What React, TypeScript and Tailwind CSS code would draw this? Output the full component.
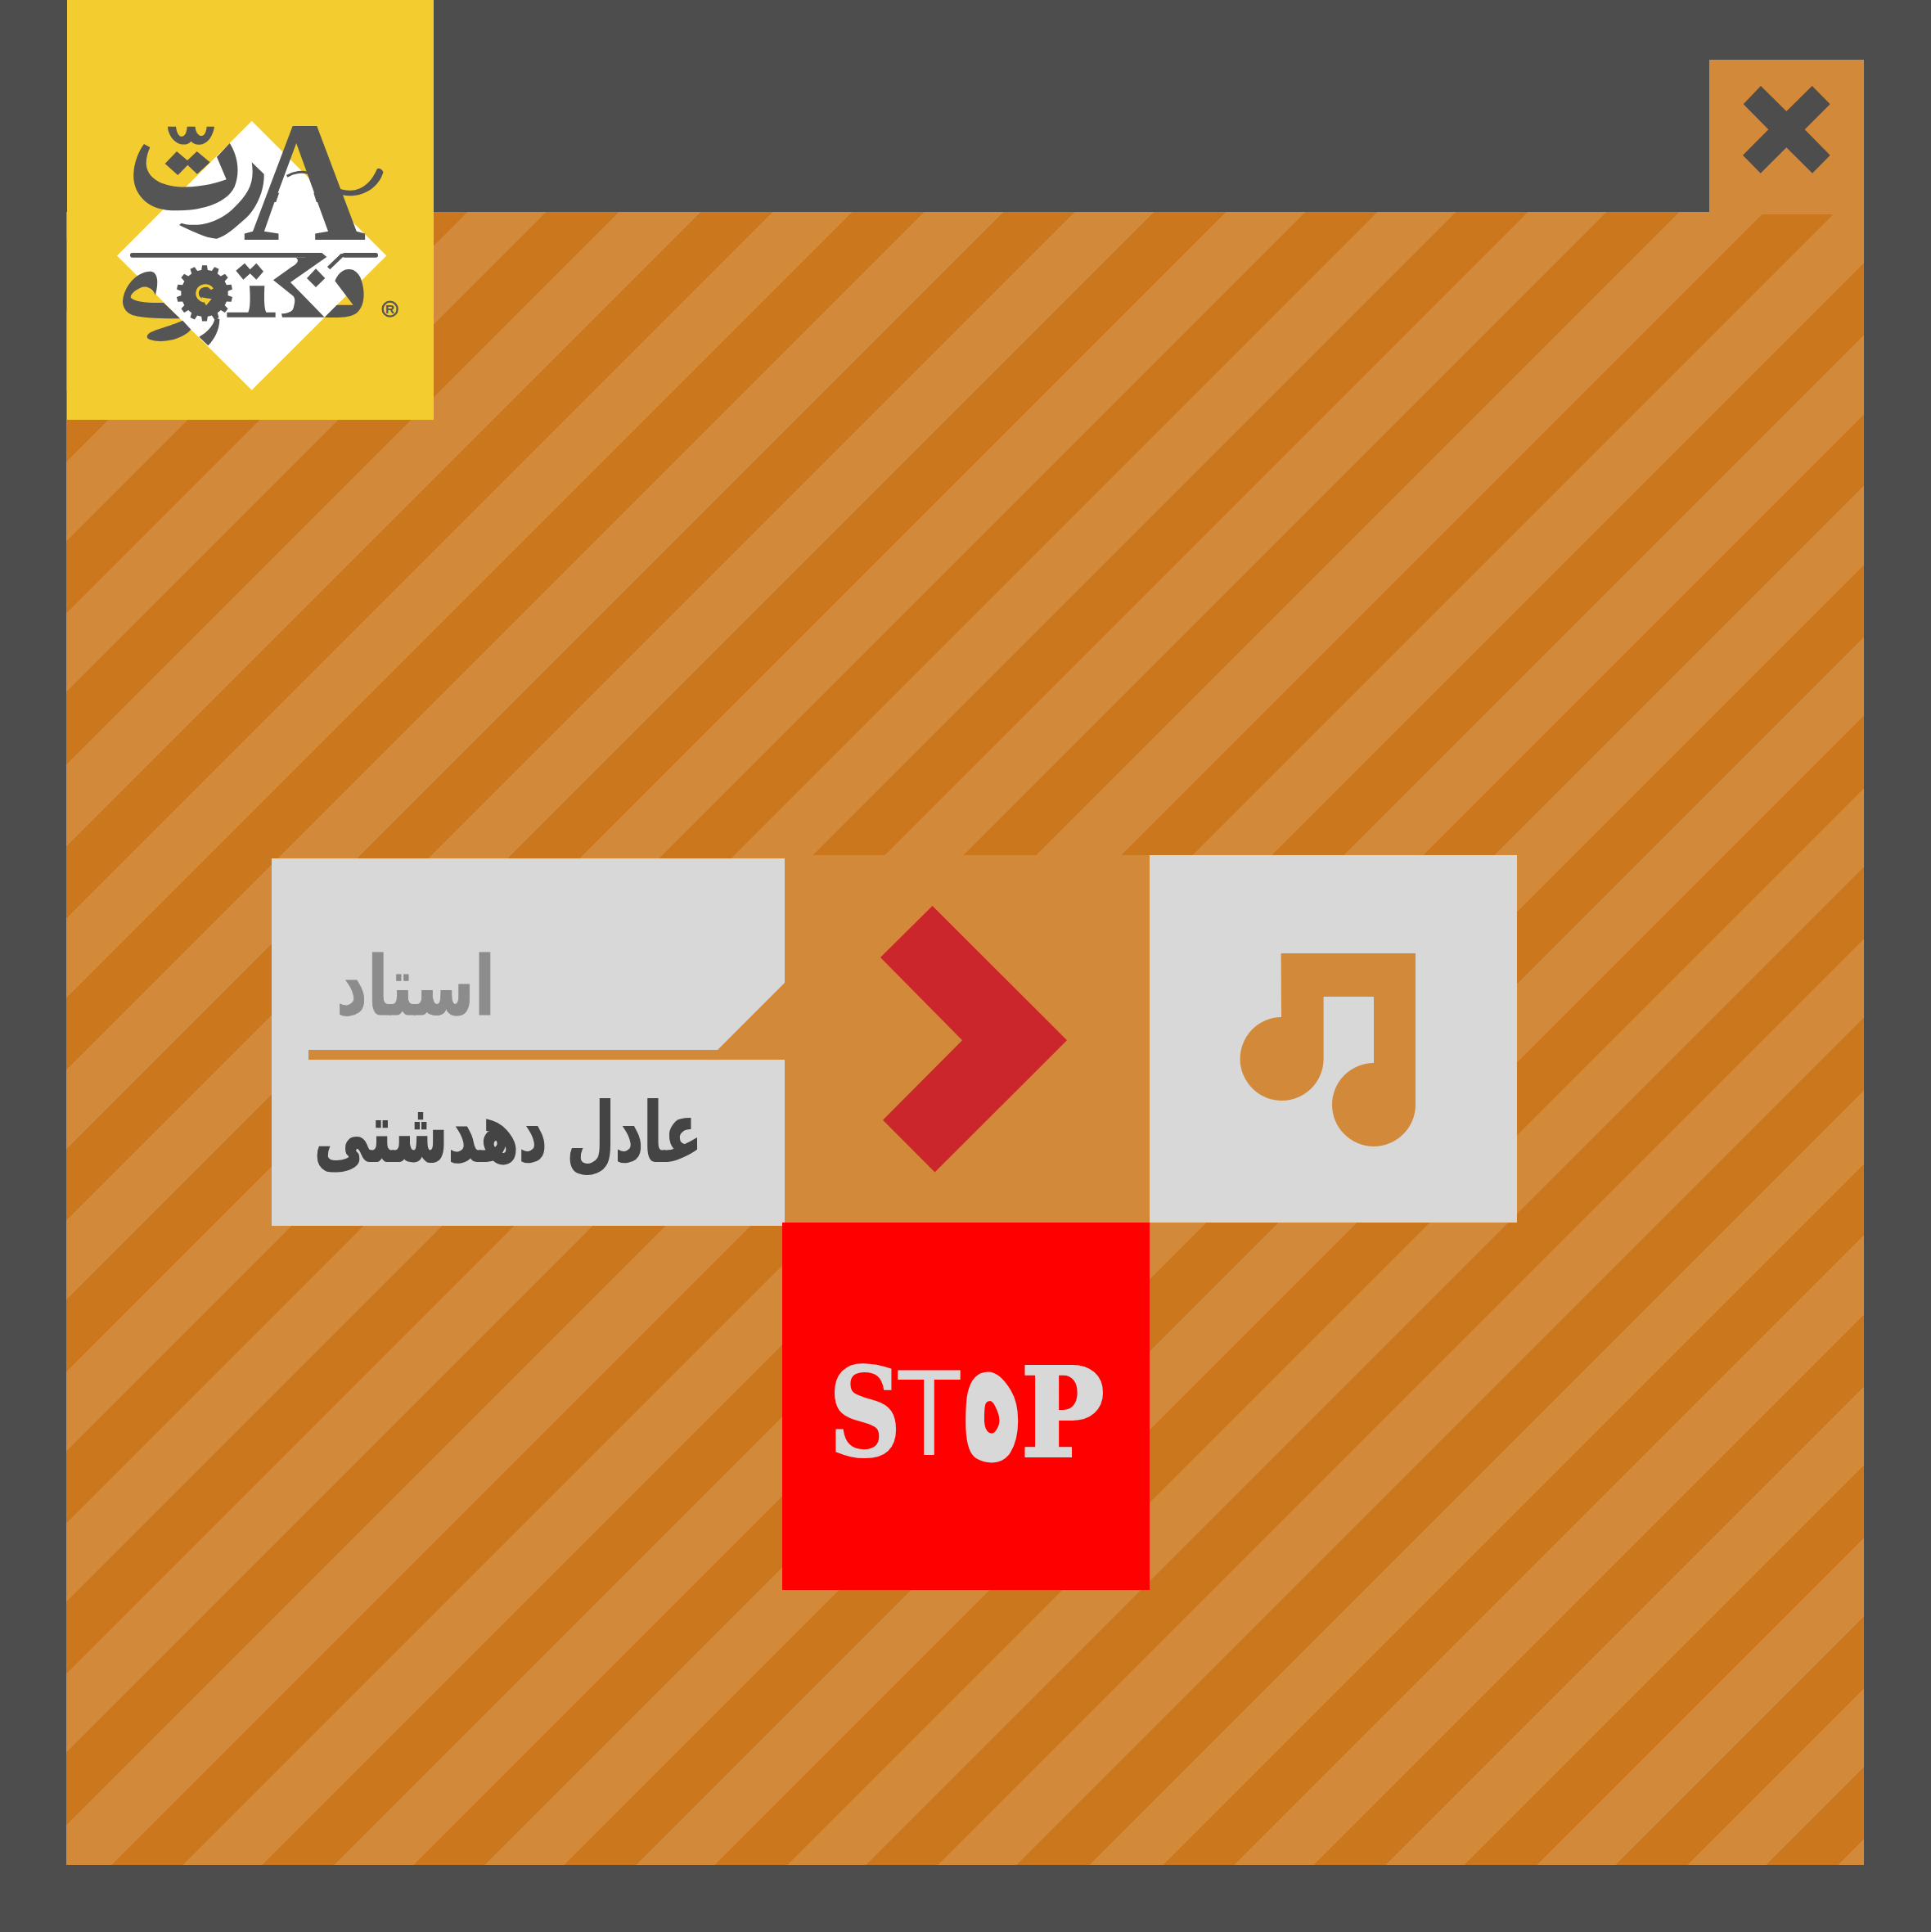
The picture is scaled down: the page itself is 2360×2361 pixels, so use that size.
const darkStarts = [373.5, 558, 742.5, 927, 1116, 1300.5, 1485, 1669.5, 1854, 2038.5, 2223, 2415, 2599.5, 2784, 2968.5, 3153, 3337.5, 3522, 3700, 3884.6, 4069, 4253.5, 4437.7]

// stripes are not quite regular in the picture, so the stops come from a list
function stripeGradient(originSum: number) {
  const light = "#d28a3a"
  const dark = "#cb771d"
  const px = (v: number) => ((v - originSum) / Math.SQRT2).toFixed(2) + "px"
  const stops = darkStarts.map((s) => `${light} ${px(s)}, ${dark} ${px(s)}, ${dark} ${px(s + 88)}, ${light} ${px(s + 88)}`)
  return `linear-gradient(135deg, ${stops.join(", ")})`
}

function gearPoints(cx: number, cy: number, root: number, tip: number, teeth: number) {
  const pts: string[] = []
  const step = (Math.PI * 2) / teeth
  for (let i = 0; i < teeth; i++) {
    const a = i * step - Math.PI / 2
    const offs: [number, number][] = [
      [-0.5, root],
      [-0.3, root],
      [-0.19, tip],
      [0.19, tip],
      [0.3, root],
    ]
    offs.forEach(([o, r]) => {
      const t = a + o * step
      pts.push(`${(cx + r * Math.cos(t)).toFixed(1)},${(cy + r * Math.sin(t)).toFixed(1)}`)
    })
  }
  return pts.join(" ")
}

function Logo() {
  const ink = "#555555"
  return (
    <svg viewBox="0 0 448 513" className="w-full h-full">
      <polygon points="225.7,147.7 390.3,312.5 225.7,476.7 61,312.5" fill="#ffffff" />
      <g transform="translate(58 140) scale(0.33333)" fill={ink}>
        <path d="M108 108 L130 120 C110 165 105 215 160 245 C225 280 340 265 410 238 L375 155 L422 105 C445 140 465 200 440 265 C410 330 300 360 190 350 C110 340 65 280 70 215 C72 175 88 135 108 108 Z" />
        <path d="M195 44 H225 C228 70 238 82 247 80 C258 80 265 65 266 44 H296 C296 65 310 80 320 78 C330 78 337 60 338 44 H366 C360 85 335 112 310 110 C295 110 285 105 281 98 C270 110 255 112 240 108 C215 100 195 70 195 44 Z" />
        <path d="M185 180 L228 135 L267 168 L302 135 L350 175 L303 218 L268 185 L232 222 Z" />
        <path d="M237 405 L245 398 C300 415 380 400 440 340 C490 290 515 250 503 175 L548 218 C550 280 520 350 470 390 C440 415 410 445 375 455 C340 455 290 430 237 405 Z" />
        <text x="470" y="458" fontSize="627" fontWeight="700" fontFamily="'Liberation Serif', serif">A</text>
        <path d="M790 250 C830 290 920 300 962 200 C970 192 985 205 985 212 C965 280 880 320 805 285 Z" />
        <polygon points="612,262 722,262 742,326 590,326" fill="#ffffff" />
        <path d="M632 226 C660 210 690 208 708 214" fill="none" stroke={ink} strokeWidth="9" />
      </g>
      <g transform="translate(58 290) scale(0.33333)" fill={ink}>
        <rect x="57" y="57" width="700" height="17" rx="8" />
        <rect x="835" y="57" width="131" height="17" rx="8" />
        <path d="M665 74 H700 L690 57 H760 L778 72 L645 165 L770 293 H615 L612 280 C630 280 650 275 655 262 C660 245 665 225 655 215 L582 157 L650 108 C668 98 680 85 665 74 Z" />
        <path d="M780 108 L830 60 H850 L790 118 Z" />
        <polygon points="705,150 738,115 772,150 738,183" />
        <path d="M808 160 C830 105 880 105 900 145 C920 190 920 250 890 275 C870 295 820 295 770 293 L815 248 H875 Z" />
        <path d="M30 235 C35 175 85 125 130 125 C155 125 165 155 150 212 C135 180 110 178 95 185 C70 195 55 215 60 222 C80 240 130 240 180 240 L240 298 C180 298 110 298 65 285 C45 278 30 260 30 235 Z" />
        <path d="M120 360 C130 340 180 335 250 305 L280 338 C250 375 170 390 130 375 C120 372 118 365 120 360 Z" />
        <path d="M310 365 C345 345 365 320 368 295 L385 300 C385 340 365 375 343 397 Z" />
        <polygon points={gearPoints(330, 205, 86, 103, 14)} />
        <path d="M412 275 H490 C498 260 498 220 495 178 H550 C548 220 548 260 556 275 H590 V293 H412 Z" />
        <polygon points="445,122 477,95 497,118 520,95 546,125 520,155 497,133 472,155" />
        <circle cx="1010" cy="263" r="27" fill="none" stroke={ink} strokeWidth="7" />
        <text x="1010" y="280" fontSize="46" fontWeight="700" textAnchor="middle" fontFamily="'Liberation Sans', sans-serif">R</text>
      </g>
      <g transform="translate(58 290) scale(0.33333)">
        <path d="M358 190 C345 168 305 175 303 205 C303 220 315 230 328 234" fill="none" stroke="#f3cc30" strokeWidth="11" />
        <polygon points="318,220 356,226 336,250" fill="#f3cc30" />
      </g>
    </svg>
  )
}

export default function App() {
  return (
    <div className="relative w-[2360px] h-[2361px] overflow-hidden bg-[#4d4d4d]">
      <div className="pt-[259px] pl-[81px]">
        <div className="w-[2197px] h-[2020px] pt-[786px] pl-[251px]" style={{ backgroundImage: stripeGradient(340) }}>
          <div className="flex items-start">
            <div className="relative mt-[4px] w-[627px] h-[449px] bg-[#d28a3a]">
              <div className="h-full bg-[#d8d8d8] [clip-path:polygon(0_0,627px_0,627px_152px,545px_234px,45px_234px,45px_246px,627px_246px,627px_449px,0_449px)]">
                <div className="h-[246px] pt-[97px] pl-[79px]">
                  <p dir="rtl" className="w-fit whitespace-nowrap origin-left scale-x-[0.74] text-[100px] leading-[120px] font-bold text-[#8c8c8c] [font-family:'DejaVu_Sans',sans-serif] [-webkit-text-stroke:1px_#8c8c8c]">استاد</p>
                </div>
                <div className="pt-[30px] pl-[52px]">
                  <p dir="rtl" className="w-fit whitespace-nowrap origin-left scale-x-[0.68] text-[100px] leading-[120px] font-bold text-[#444444] [font-family:'DejaVu_Sans',sans-serif] [-webkit-text-stroke:2px_#444444]">عادل دهدشتی</p>
                </div>
              </div>
            </div>
            <div className="w-[446px] h-[449px] bg-[#d28a3a] pl-[117px] pt-[62px]">
              <svg width="228" height="326" viewBox="0 0 228 326">
                <polygon points="63.6,0 0,63 100,164.2 3,261.8 66.5,325.4 228,164.2" fill="#cb262b" />
              </svg>
            </div>
            <div className="w-[449px] h-[449px] bg-[#d8d8d8]">
              <svg width="449" height="449" viewBox="0 0 449 449">
                <path d="M160.6 120 H325 V305 A51 51 0 1 1 274 254 V173 H212.6 V249 A51 51 0 1 1 161 198 Z" fill="#d28a3a" />
              </svg>
            </div>
          </div>
          <div className="relative z-10 -mt-[4px] ml-[624px] w-[449px] h-[449px] bg-[#ff0000] flex items-center pl-[49px] pt-[14px] text-[#d8d8d8]">
            <span className="w-[85px] text-center scale-x-[0.82] text-[150px] leading-none font-bold [font-family:'DejaVu_Serif',serif] [-webkit-text-stroke:2px_#d8d8d8]">S</span>
            <span className="w-[84px] text-center scale-x-[0.9] text-[150px] leading-none [font-family:'Liberation_Sans',sans-serif]">T</span>
            <span className="w-[69px] text-center scale-y-[2.2] translate-y-[-46px] text-[130px] leading-none font-bold [font-family:'DejaVu_Sans',sans-serif]">ه</span>
            <span className="w-[102px] text-center scale-x-[0.9] text-[150px] leading-none font-bold [font-family:'DejaVu_Serif',serif] [-webkit-text-stroke:4px_#d8d8d8]">P</span>
          </div>
        </div>
      </div>

      <div className="absolute left-[82px] top-0 w-[448px] h-[513px] bg-[#f3cc30]">
        <Logo />
      </div>

      <div className="absolute left-[2089px] top-[73px] w-[189px] h-[189px] bg-[#d28a3a] pl-[41px] pt-[32px]">
        <svg width="107" height="107" viewBox="0 0 107 107">
          <polygon points="22,0 53.3,31 84.7,0 106.7,22.3 75.7,53.3 106.7,84.7 85,106.7 53.3,75.3 21.7,106.7 0,84.7 31.3,53.3 0.7,22.3" fill="#4d4d4d" />
        </svg>
      </div>
    </div>
  )
}
